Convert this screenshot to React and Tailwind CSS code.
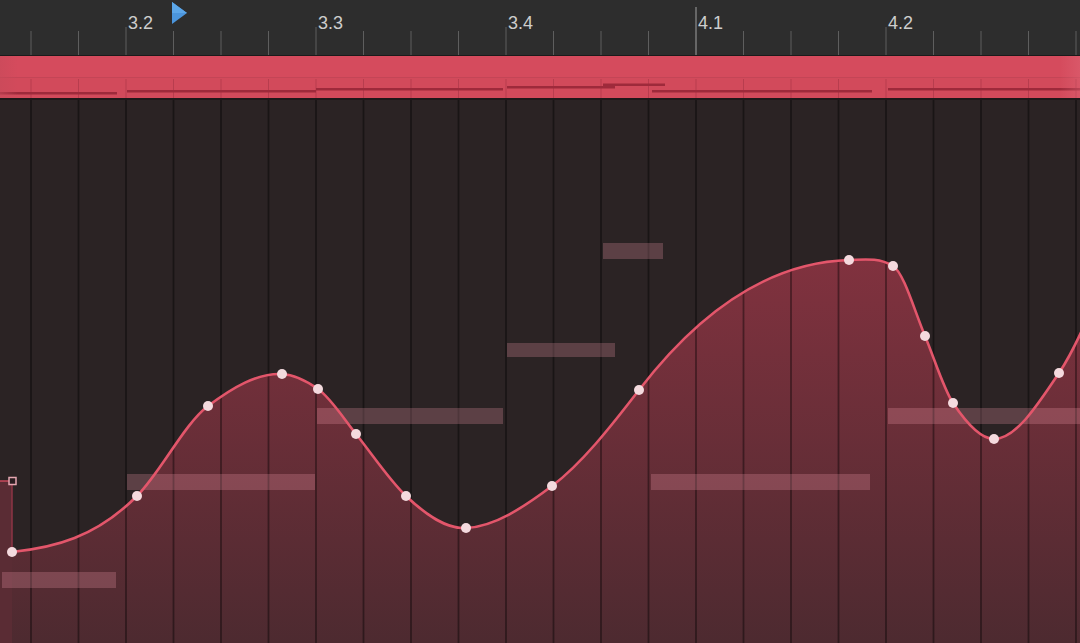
import React from 'react';

const TICK0 = 31;
const STEP = 47.5;
const ticks = Array.from({ length: 23 }, (_, i) => TICK0 + STEP * i);
const labels = [
  { i: 2, text: '3.2' },
  { i: 6, text: '3.3' },
  { i: 10, text: '3.4' },
  { i: 14, text: '4.1' },
  { i: 18, text: '4.2' },
];

// automation points: x, y (page coords), slope dy/dx
const points = [
  [12, 552, -0.1],
  [137, 496, -1.0],
  [208, 406, -0.75],
  [282, 374, 0.05],
  [318, 389, 0.7],
  [356, 434, 1.25],
  [406, 496, 0.95],
  [466, 528, -0.05],
  [552, 486, -0.75],
  [639, 390, -1.3],
  [849, 260, -0.03],
  [893, 266, 0.6],
  [925, 336, 2.4],
  [953, 403, 1.5],
  [994, 439, 0],
  [1059, 373, -1.5],
  [1084, 326, -2.2],
];

// region notes on the canvas (page coords)
const notes = [
  { x: 2, y: 572, w: 114, h: 16 },
  { x: 127, y: 474, w: 188, h: 16 },
  { x: 317, y: 408, w: 186, h: 16 },
  { x: 507, y: 343, w: 108, h: 14 },
  { x: 603, y: 243, w: 60, h: 16 },
  { x: 651, y: 474, w: 219, h: 16 },
  { x: 888, y: 408, w: 192, h: 16 },
];

// tiny notes shown inside the region strip
const miniNotes = [
  [0, 117, 93],
  [127, 316, 91],
  [316, 503, 89],
  [507, 615, 87],
  [603, 665, 84.5],
  [652, 872, 91],
  [888, 1080, 89],
];

const TOP = 100;

function curvePath() {
  const p = points.map(([x, y, m]) => [x, y - TOP, m]);
  let d = `M ${p[0][0]} ${p[0][1]}`;
  for (let i = 0; i < p.length - 1; i++) {
    const [x0, y0, m0] = p[i];
    const [x1, y1, m1] = p[i + 1];
    const dx = (x1 - x0) / 3;
    d += ` C ${x0 + dx} ${y0 + m0 * dx} ${x1 - dx} ${y1 - m1 * dx} ${x1} ${y1}`;
  }
  return d;
}

function Ruler() {
  return (
    <div className="relative h-[56px] shrink-0 bg-[#2d2d2d] border-b border-[#1b1b1b]">
      <svg className="absolute inset-0" width="1080" height="55">
        {ticks.map((x, i) => {
          const major = labels.some((l) => l.i === i);
          const bar = i === 14;
          return (
            <line
              key={i}
              x1={x}
              x2={x}
              y1={bar ? 7 : major ? 27 : 31}
              y2={55}
              stroke={bar ? '#a0a0a0' : '#5e5e5e'}
              strokeWidth="1"
            />
          );
        })}
        <polygon points="172,2 187,13 172,24" fill="#4b95dc" />
        <polygon points="172,2 187,13 172,13" fill="#5ca6e8" />
      </svg>
      {labels.map((l) => (
        <span
          key={l.text}
          className="absolute top-[14px] text-[18px] leading-none text-[#cdcdcd] font-['Liberation_Sans',sans-serif]"
          style={{ left: ticks[l.i] + 2 }}
        >
          {l.text}
        </span>
      ))}
    </div>
  );
}

function RegionStrip() {
  return (
    <div className="relative h-[44px] shrink-0 bg-[#d24a5b] border-b-2 border-[#1e1819]">
      <div className="h-[22px] bg-[#d54b5d] border-b border-[#c44556]" />
      <svg className="absolute inset-0" width="1080" height="42">
        {ticks.map((x, i) => (
          <line key={i} x1={x} x2={x} y1={23} y2={42} stroke="rgba(90,20,30,0.22)" strokeWidth="1" />
        ))}
        {miniNotes.map(([a, b, y], i) => (
          <rect key={i} x={a} y={y - 57} width={b - a} height="2.5" fill="#9e2a3b" />
        ))}
      </svg>
      <div className="absolute left-0 top-0 bottom-0 w-[18px] bg-gradient-to-l from-transparent to-[#c84a5a]/60" />
      <div className="absolute right-0 top-0 bottom-0 w-[20px] bg-gradient-to-r from-transparent to-[#e06a7a]/40" />
    </div>
  );
}

function Canvas() {
  const d = curvePath();
  const last = points[points.length - 1];
  const fillD = `${d} L ${last[0]} 543 L 12 543 Z`;
  return (
    <div className="relative flex-1 bg-[#2b2324]">
      <svg className="absolute inset-0" width="1080" height="543">
        <defs>
          <linearGradient id="fillGrad" x1="0" y1="150" x2="0" y2="543" gradientUnits="userSpaceOnUse">
            <stop offset="0" stopColor="#82323f" />
            <stop offset="1" stopColor="#4d2a30" />
          </linearGradient>
        </defs>
        <path d={fillD} fill="url(#fillGrad)" />
        <rect x="0" y="381" width="12" height="162" fill="#5a2c34" />
        {ticks.map((x, i) => (
          <line key={i} x1={x} x2={x} y1={0} y2={543} stroke="rgba(0,0,0,0.4)" strokeWidth="1.8" />
        ))}
        {notes.map((n, i) => (
          <rect
            key={i}
            x={n.x}
            y={n.y - TOP}
            width={n.w}
            height={n.h}
            fill="rgba(255,165,180,0.23)"
          />
        ))}
        <line x1="0" y1="381" x2="10" y2="381" stroke="#c9485b" strokeWidth="1.5" />
        <line x1="12" y1="385" x2="12" y2="452" stroke="#8e3545" strokeWidth="1.5" />
        <path d={d} fill="none" stroke="#e3566b" strokeWidth="2.6" />
        <rect x="9" y="377.5" width="7" height="7" fill="#2a1d20" stroke="#e5a7b1" strokeWidth="1.5" />
        {points.slice(0, -1).map(([x, y], i) => (
          <circle key={i} cx={x} cy={y - TOP} r="5" fill="#f4dade" />
        ))}
      </svg>
    </div>
  );
}

export default function App() {
  return (
    <div className="w-[1080px] h-[643px] flex flex-col overflow-hidden bg-[#2b2324]">
      <Ruler />
      <RegionStrip />
      <Canvas />
    </div>
  );
}
